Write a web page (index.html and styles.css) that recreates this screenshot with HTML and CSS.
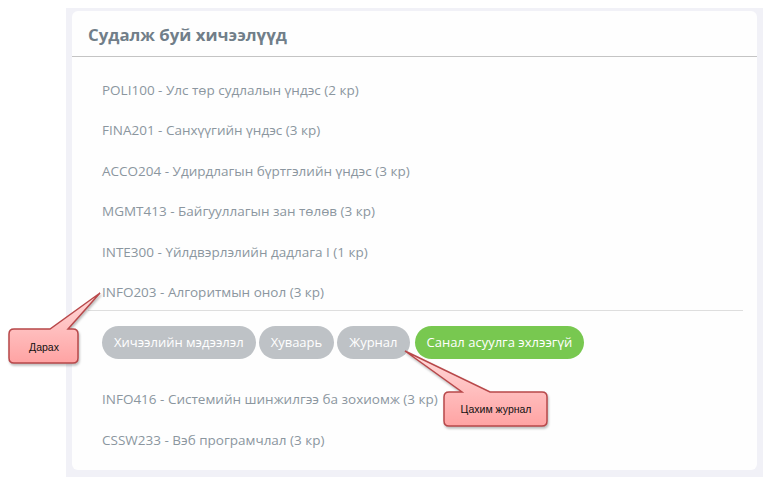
FILE: index.html
```
<!DOCTYPE html>
<html lang="mn">
<head>
    <meta charset="UTF-8">
    <meta name="viewport" content="width=device-width, initial-scale=1.0">
    <title>Судалж буй хичээлүүд</title>
    <link rel="stylesheet" href="styles.css">
</head>
<body>
    <div class="panel">
        <div class="card">
            <div class="card-header">
                <h2>Судалж буй хичээлүүд</h2>
            </div>

            <div class="course-list">
                <div class="course">POLI100 - Улс төр судлалын үндэс (2 кр)</div>
                <div class="course">FINA201 - Санхүүгийн үндэс (3 кр)</div>
                <div class="course">ACCO204 - Удирдлагын бүртгэлийн үндэс (3 кр)</div>
                <div class="course">MGMT413 - Байгууллагын зан төлөв (3 кр)</div>
                <div class="course">INTE300 - Үйлдвэрлэлийн дадлага I (1 кр)</div>

                <div class="course-open">
                    <div class="course">INFO203 - Алгоритмын онол (3 кр)</div>
                    <div class="course-actions">
                        <span class="pill">Хичээлийн мэдээлэл</span>
                        <span class="pill">Хуваарь</span>
                        <span class="pill">Журнал</span>
                        <span class="pill pill-green">Санал асуулга эхлээгүй</span>
                    </div>
                </div>

                <div class="course">INFO416 - Системийн шинжилгээ ба зохиомж (3 кр)</div>
                <div class="course">CSSW233 - Вэб програмчлал (3 кр)</div>
            </div>
        </div>
    </div>

    <!-- callouts -->
    <svg class="callouts" width="768" height="481" viewBox="0 0 768 481">
        <defs>
            <linearGradient id="pink" x1="0" y1="0" x2="0" y2="1">
                <stop offset="0" stop-color="#ffdcdc"/>
                <stop offset="1" stop-color="#ffa3a3"/>
            </linearGradient>
        </defs>
        <path class="bubble" d="M14,329 H50 L100,293 L68,329 H73 Q78,329 78,334 V358 Q78,363 73,363 H14 Q9,363 9,358 V334 Q9,329 14,329 Z"/>
        <text class="bubble-text" x="44" y="351" text-anchor="middle">Дарах</text>
        <path class="bubble" d="M449,392 H462 L405,351 L490,392 H542 Q547,392 547,397 V421 Q547,426 542,426 H449 Q444,426 444,421 V397 Q444,392 449,392 Z"/>
        <text class="bubble-text" x="496" y="413" text-anchor="middle">Цахим журнал</text>
    </svg>
</body>
</html>
```
FILE: styles.css
```
body {
    font-family: "Open Sans", "Noto Sans", sans-serif;
    background: #ffffff;
    margin: 0;
    padding: 8px 0 0 66px;
}

.panel {
    width: 697px;
    height: 469px;
    box-sizing: border-box;
    background: #f1f1f7;
    padding: 3px 6px 7px 6px;
}

.card {
    background: #fefefe;
    border-radius: 6px;
    height: 459px;
}

.card-header {
    padding: 0 16px;
    height: 45px;
    border-bottom: 1px solid #c4c4c4;
    display: flex;
    align-items: center;
}

.card-header h2 {
    margin: 2px 0 0 0;
    font-size: 16.8px;
    font-weight: 700;
    color: #717e89;
}

.course-list {
    padding: 13px 0 0 0;
}

.course {
    padding: 10px 30px;
    line-height: 20.4px;
    font-size: 13.5px;
    color: #8b969f;
}

.course-open .course {
    padding-bottom: 8px;
}

.course-actions {
    margin: 0 14px 0 16px;
    border-top: 1px solid #dedede;
    padding: 15px 14px 20px 14px;
    display: flex;
    gap: 3px;
}

.pill {
    height: 33px;
    line-height: 33px;
    padding: 0 12px;
    border-radius: 17px;
    background: #bec2c6;
    color: #ffffff;
    font-size: 13px;
}

.pill-green {
    background: #78c850;
    margin-left: 2px;
}

.callouts {
    position: absolute;
    top: 0;
    left: 0;
    pointer-events: none;
}

.bubble {
    fill: url(#pink);
    stroke: #b8484a;
    stroke-width: 1.5;
    filter: drop-shadow(1px 2px 1px rgba(0,0,0,0.25));
}

.bubble-text {
    font-family: "Liberation Sans", Arial, sans-serif;
    font-size: 10.5px;
    fill: #111111;
}
```
